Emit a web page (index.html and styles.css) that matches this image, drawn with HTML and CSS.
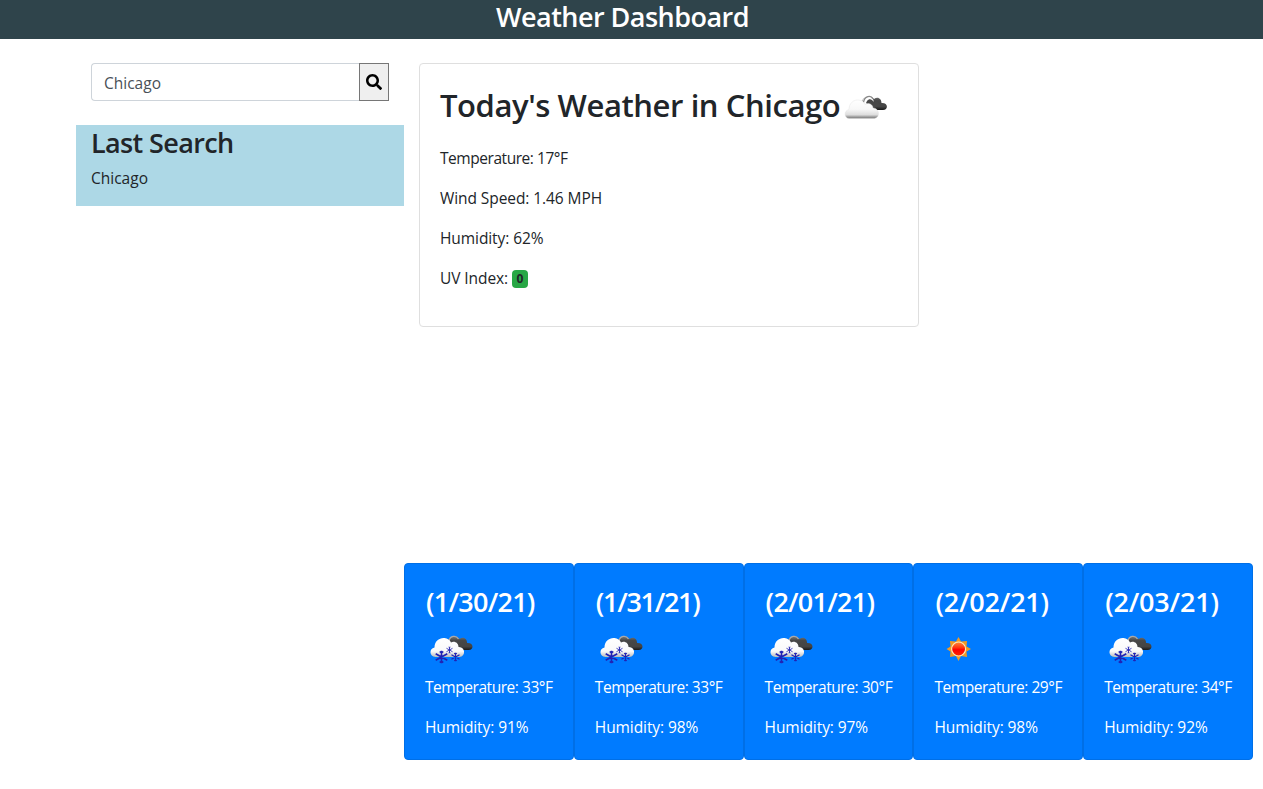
FILE: index.html
```html
<!DOCTYPE html>
<html lang="en">
<head>
<meta charset="utf-8">
<title>Weather Dashboard</title>
<link rel="stylesheet" href="styles.css">
</head>
<body>
<svg class="defs" width="0" height="0" aria-hidden="true">
  <defs>
    <linearGradient id="white-cloud" x1="0" y1="0" x2="0" y2="1">
      <stop offset="0" stop-color="#fff"/><stop offset=".5" stop-color="#f8f8f8"/><stop offset=".8" stop-color="#ddd"/><stop offset=".92" stop-color="#999"/><stop offset="1" stop-color="#777"/>
    </linearGradient>
    <linearGradient id="snow-cloud" x1="0" y1="0" x2="0" y2="1">
      <stop offset="0" stop-color="#fff"/><stop offset=".7" stop-color="#fafafa"/><stop offset="1" stop-color="#bbb"/>
    </linearGradient>
    <linearGradient id="dark-cloud" x1="0" y1="0" x2="0" y2="1">
      <stop offset="0" stop-color="#777"/><stop offset=".3" stop-color="#484848"/><stop offset=".75" stop-color="#444"/><stop offset="1" stop-color="#181818"/>
    </linearGradient>
    <linearGradient id="sun-core" x1="0" y1="0" x2="0" y2="1">
      <stop offset="0" stop-color="#ff8a38"/><stop offset=".4" stop-color="#ff3510"/><stop offset=".55" stop-color="#f00"/><stop offset="1" stop-color="#ff2800"/>
    </linearGradient>
    <path id="back-cloud" d="M22 20C21 13 30 10 34 15C38 12 41.500 15 41.500 19C48.500 18.500 48.500 26 43 26H33C28 26 24 24 22 20Z"/>
    <g id="flake" fill="none" stroke="#2222b4" stroke-width="1.600">
      <path d="M0-6.200V6.200M-5.800-3.300L5.800 3.300M-5.800 3.300L5.800-3.300M-1.800-5.500L0-4L1.800-5.500M-1.800 5.500L0 4L1.800 5.500"/>
    </g>
    <symbol id="cloudy" viewBox="0 0 50 50">
      <use href="#back-cloud" fill="url(#dark-cloud)"/>
      <path d="M21 22C22 11 32 9 34 18L30 25Z" fill="#fff"/>
      <path d="M23.500 18.500C24.500 11.500 31 11 33 15" fill="none" stroke="#888" stroke-width="1.300"/>
      <path d="M27 17C29 14 32 15 33.500 17.500C38 16 40 20 40 22L32 24L26 19Z" fill="#484848"/>
      <path d="M9.500 34.500C4 34.500 3.500 26.500 9 25.500C9 19 14 15.500 18.500 16C22 16.200 24 18 25 20.500C29 18 33 21 33 24C39 23.500 41 33.500 34.500 34.500Z" fill="url(#white-cloud)" stroke="#ddd" stroke-width=".4"/>
    </symbol>
    <symbol id="snow" viewBox="0 0 50 50">
      <use href="#back-cloud" x=".6" fill="url(#dark-cloud)"/>
      <path d="M24 17C25 11.500 31 11 33.500 15" fill="none" stroke="#aaa" stroke-width="1.300"/>
      <path d="M10.500 33C4 32.500 4 24.500 9.500 23.500C9.500 17 14.500 13.500 19.500 14C22.500 14.200 25 16 26 18.500C29.500 16.500 33.500 19 33.500 23C40.500 22.500 41 32.500 34.500 33Z" fill="url(#snow-cloud)"/>
      <use href="#flake" transform="translate(16.500 33)"/>
      <use href="#flake" transform="translate(24.500 26) scale(.52)"/>
      <use href="#flake" transform="translate(30.500 33) scale(.7)"/>
    </symbol>
    <symbol id="sun" viewBox="0 0 50 50">
      <path d="M24.500 13L27 17.500L33 17L32.500 22.500L37 25L32.500 27.500L33 33L27 32L24.500 37L22 32L16 33L16.500 27.500L12.500 25L16.500 22.500L16 17L22 17.500Z" fill="#f39a22"/>
      <circle cx="24.600" cy="25" r="7" fill="url(#sun-core)" stroke="#ffe6b8" stroke-width="1.200"/>
    </symbol>
  </defs>
</svg>
<header class="banner"><h1 class="banner-title">Weather Dashboard</h1></header>
<div class="dashboard">
  <aside class="sidebar">
    <form class="search">
      <input class="search-input" type="text" value="Chicago" aria-label="City">
      <button class="search-button" type="button" aria-label="Search"><svg width="16" height="16" viewBox="0 0 512 512"><path d="M505 442.700L405.300 343c-4.500-4.500-10.600-7-17-7H372c27.600-35.300 44-79.700 44-128C416 93.100 322.900 0 208 0S0 93.100 0 208s93.100 208 208 208c48.300 0 92.700-16.400 128-44v16.300c0 6.400 2.500 12.500 7 17l99.700 99.700c9.400 9.400 24.600 9.400 33.900 0l28.300-28.300c9.400-9.400 9.400-24.600.1-34zM208 336c-70.700 0-128-57.200-128-128 0-70.700 57.200-128 128-128 70.700 0 128 57.200 128 128 0 70.700-57.200 128-128 128z"/></svg></button>
    </form>
    <section class="history">
      <h2 class="history-title">Last Search</h2>
      <p class="history-item">Chicago</p>
    </section>
  </aside>
  <main class="content">
    <section class="today">
      <h2 class="today-title"><span>Today's Weather in Chicago</span><svg class="icon"><use href="#cloudy"/></svg></h2>
      <p class="reading temperature">Temperature: 17°F</p>
      <p class="reading">Wind Speed: 1.46 MPH</p>
      <p class="reading">Humidity: 62%</p>
      <p class="reading">UV Index: <span class="uv">0</span></p>
    </section>
    <section class="forecast">
      <article class="day"><h3 class="date">(1/30/21)</h3><svg class="icon"><use href="#snow"/></svg><p class="reading temperature">Temperature: 33°F</p><p class="reading">Humidity: 91%</p></article>
      <article class="day"><h3 class="date date-narrow">(1/31/21)</h3><svg class="icon"><use href="#snow"/></svg><p class="reading temperature">Temperature: 33°F</p><p class="reading">Humidity: 98%</p></article>
      <article class="day"><h3 class="date">(2/01/21)</h3><svg class="icon"><use href="#snow"/></svg><p class="reading temperature">Temperature: 30°F</p><p class="reading">Humidity: 97%</p></article>
      <article class="day"><h3 class="date date-wide">(2/02/21)</h3><svg class="icon"><use href="#sun"/></svg><p class="reading temperature">Temperature: 29°F</p><p class="reading">Humidity: 98%</p></article>
      <article class="day"><h3 class="date date-wide">(2/03/21)</h3><svg class="icon"><use href="#snow"/></svg><p class="reading temperature">Temperature: 34°F</p><p class="reading">Humidity: 92%</p></article>
    </section>
  </main>
</div>
</body>
</html>
```

FILE: styles.css
```css
* { box-sizing: border-box; }
body { margin: 0; background: #fff; color: #212529; font: 380 15.5px/24px "Open Sans", "Noto Sans", sans-serif; overflow: hidden; }
h1, h2, h3, p { margin: 0; white-space: nowrap; }
.defs { display: block; }
.banner { height: 39px; background: #2f444b; color: #fff; text-align: center; padding-right: 18px; }
.banner-title { font-size: 27px; font-weight: 580; line-height: 34px; letter-spacing: -.53px; }
.dashboard { display: flex; padding-left: 76px; }
.sidebar { width: 328px; flex: none; padding-top: 24px; }
.search { display: flex; margin: 0 15px 24px; height: 38px; }
.search-input { flex: 1; min-width: 0; height: 38px; padding: 8px 12px 6px; border: 1px solid #ced4da; border-right: 0; border-radius: 4px 0 0 4px; background: #fff; color: #495057; font: inherit; }
.search-button { width: 30px; height: 38px; padding: 0; border: 1px solid #767676; background: #efefef; display: flex; align-items: center; justify-content: center; }
.history { height: 81px; background: #add8e6; padding: 1px 15px; }
.history-title { font-size: 27px; font-weight: 580; line-height: 34px; letter-spacing: -.62px; }
.history-item { padding-top: 6px; }
.content { padding-top: 24px; }
.today { width: 500px; height: 264px; margin-left: 15px; padding: 17px 20px; border: 1px solid #dfdfdf; border-radius: 4px; }
.today-title { display: flex; align-items: center; height: 50px; margin-bottom: 15px; font-size: 31px; font-weight: 580; line-height: 38px; letter-spacing: -.42px; }
.today-title span { padding-bottom: 2px; }
.today-title .icon { margin-top: 5px; }
.icon { display: block; flex: none; width: 50px; height: 50px; }
.reading { margin-bottom: 16px; letter-spacing: -.08px; }
.temperature { letter-spacing: -.45px; }
.uv { display: inline-block; width: 16px; height: 18px; border-radius: 4px; background: #28a745; font-size: 12px; font-weight: 700; line-height: 18px; text-align: center; vertical-align: 1px; }
.forecast { display: flex; width: 849px; margin-top: 236px; }
.day { flex: 1 1 0; min-width: 0; height: 197px; padding: 20px; border: 1px solid #006fe6; border-radius: 4px; background: #007bff; color: #fff; }
.date { height: 40px; padding-left: 1px; font-size: 27px; font-weight: 600; line-height: 36px; letter-spacing: -.75px; }
.date-narrow { letter-spacing: -1.3px; }
.date-wide { letter-spacing: -.2px; }
.day .icon { margin-bottom: 1px; }
```
